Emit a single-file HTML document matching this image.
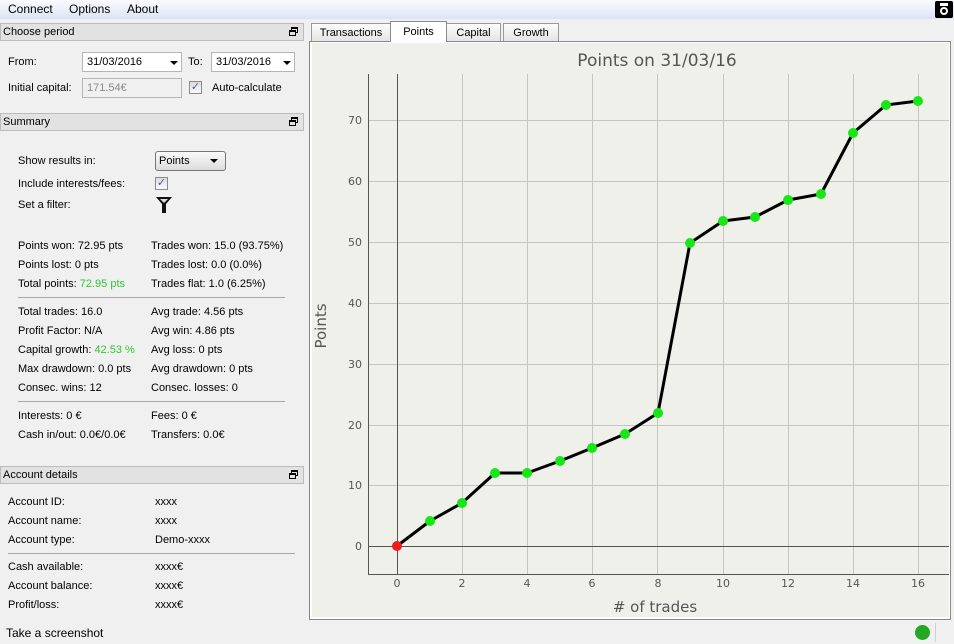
<!DOCTYPE html>
<html><head><meta charset="utf-8"><style>
*{box-sizing:border-box}
body{margin:0;width:954px;height:644px;background:#f0f0f0;font-family:"Liberation Sans",sans-serif;font-size:11px;color:#000;position:relative;overflow:hidden}
.a{position:absolute;white-space:nowrap}
.menu{left:0;top:0;width:954px;height:19px;background:linear-gradient(#fafbfe,#dde3f3);font-size:12px}
.hdr{position:absolute;left:0;width:304px;height:18px;background:#e2e2e2;border:1px solid #bcbcbc;padding:2px 0 0 2px;font-size:11px}
.hdr .ic{position:absolute;right:5px;top:3px;width:9px;height:9px}
.inp{position:absolute;background:#fff;border:1px solid #b5b5b5;height:20px;padding:3px 4px;font-size:11px}
.arr{position:absolute;width:0;height:0;border-left:4px solid transparent;border-right:4px solid transparent;border-top:4px solid #000}
.cb{position:absolute;width:13px;height:13px;border:1px solid #8a8a8a;background:linear-gradient(#dcdcdc,#fafafa)}
.g{color:#2ec82e}
.hr{position:absolute;height:1px;background:#a8a8a8}
.tab{position:absolute;top:23px;height:18px;border:1px solid #9a9a9a;border-bottom:none;background:linear-gradient(#fdfdfd,#e4e4e4);padding:3px 0 0;text-align:center}
</style></head><body>
<div class="a menu"><span class="a" style="left:8px;top:2px">Connect</span><span class="a" style="left:69px;top:2px">Options</span><span class="a" style="left:127px;top:2px">About</span>
<div class="a" style="left:935px;top:1px;width:18px;height:17px;background:#000;border-radius:2px"><div class="a" style="left:5px;top:6px;width:8px;height:8px;border:2px solid #fff;border-radius:50%"></div><div class="a" style="left:5px;top:2px;width:8px;height:3px;background:#fff"></div></div></div>

<div class="hdr" style="top:23px">Choose period<svg class="ic" viewBox="0 0 9 9"><rect x="2.5" y=".5" width="6" height="5" fill="none" stroke="#000"/><rect x="2" y="0" width="7" height="2"/><rect x=".5" y="3.5" width="6" height="5" fill="#e2e2e2" stroke="#000"/><rect x="0" y="3" width="7" height="2"/></svg></div>
<span class="a" style="left:8px;top:56px">From:</span>
<div class="inp" style="left:82px;top:52px;width:100px">31/03/2016</div><div class="arr" style="left:170px;top:61px"></div>
<span class="a" style="left:188px;top:56px">To:</span>
<div class="inp" style="left:211px;top:52px;width:84px">31/03/2016</div><div class="arr" style="left:283px;top:61px"></div>
<span class="a" style="left:8px;top:82px">Initial capital:</span>
<div class="inp" style="left:82px;top:78px;width:100px;background:#f0f0f0;color:#888">171.54€</div>
<div class="cb" style="left:189px;top:81px;color:#3a5fb0;font-size:11px;line-height:11px;text-align:center">✓</div>
<span class="a" style="left:212px;top:82px">Auto-calculate</span>

<div class="hdr" style="top:113px">Summary<svg class="ic" viewBox="0 0 9 9"><rect x="2.5" y=".5" width="6" height="5" fill="none" stroke="#000"/><rect x="2" y="0" width="7" height="2"/><rect x=".5" y="3.5" width="6" height="5" fill="#e2e2e2" stroke="#000"/><rect x="0" y="3" width="7" height="2"/></svg></div>
<span class="a" style="left:18px;top:155px">Show results in:</span>
<div class="a" style="left:155px;top:151px;width:71px;height:20px;border:1px solid #777;border-radius:3px;background:linear-gradient(#fafafa,#dcdcdc);padding:3px 3px">Points</div><div class="arr" style="left:210px;top:159px"></div>
<span class="a" style="left:18px;top:178px">Include interests/fees:</span>
<div class="cb" style="left:155px;top:177px;color:#3a5fb0;font-size:11px;line-height:11px;text-align:center">✓</div>
<span class="a" style="left:18px;top:199px">Set a filter:</span>
<svg class="a" style="left:156px;top:197px" width="16" height="16" viewBox="0 0 16 16"><path d="M0 0H16L10 7V16H6V7Z" fill="#111"/><path d="M4 2H12L8 6Z" fill="#ddd"/></svg>
<span class="a" style="left:18px;top:240px">Points won: 72.95 pts</span><span class="a" style="left:151px;top:240px">Trades won: 15.0 (93.75%)</span>
<span class="a" style="left:18px;top:259px">Points lost: 0 pts</span><span class="a" style="left:151px;top:259px">Trades lost: 0.0 (0.0%)</span>
<span class="a" style="left:18px;top:278px">Total points: <span class="g">72.95 pts</span></span><span class="a" style="left:151px;top:278px">Trades flat: 1.0 (6.25%)</span>
<div class="hr" style="left:18px;top:297px;width:267px"></div>
<span class="a" style="left:18px;top:306px">Total trades: 16.0</span><span class="a" style="left:151px;top:306px">Avg trade: 4.56 pts</span>
<span class="a" style="left:18px;top:325px">Profit Factor: N/A</span><span class="a" style="left:151px;top:325px">Avg win: 4.86 pts</span>
<span class="a" style="left:18px;top:344px">Capital growth: <span class="g">42.53 %</span></span><span class="a" style="left:151px;top:344px">Avg loss: 0 pts</span>
<span class="a" style="left:18px;top:363px">Max drawdown: 0.0 pts</span><span class="a" style="left:151px;top:363px">Avg drawdown: 0 pts</span>
<span class="a" style="left:18px;top:382px">Consec. wins: 12</span><span class="a" style="left:151px;top:382px">Consec. losses: 0</span>
<div class="hr" style="left:18px;top:401px;width:267px"></div>
<span class="a" style="left:18px;top:410px">Interests: 0 €</span><span class="a" style="left:151px;top:410px">Fees: 0 €</span>
<span class="a" style="left:18px;top:429px">Cash in/out: 0.0€/0.0€</span><span class="a" style="left:151px;top:429px">Transfers: 0.0€</span>

<div class="hdr" style="top:466px">Account details<svg class="ic" viewBox="0 0 9 9"><rect x="2.5" y=".5" width="6" height="5" fill="none" stroke="#000"/><rect x="2" y="0" width="7" height="2"/><rect x=".5" y="3.5" width="6" height="5" fill="#e2e2e2" stroke="#000"/><rect x="0" y="3" width="7" height="2"/></svg></div>
<span class="a" style="left:8px;top:496px">Account ID:</span><span class="a" style="left:155px;top:496px">xxxx</span>
<span class="a" style="left:8px;top:515px">Account name:</span><span class="a" style="left:155px;top:515px">xxxx</span>
<span class="a" style="left:8px;top:534px">Account type:</span><span class="a" style="left:155px;top:534px">Demo-xxxx</span>
<div class="hr" style="left:8px;top:553px;width:287px"></div>
<span class="a" style="left:8px;top:561px">Cash available:</span><span class="a" style="left:155px;top:561px">xxxx€</span>
<span class="a" style="left:8px;top:580px">Account balance:</span><span class="a" style="left:155px;top:580px">xxxx€</span>
<span class="a" style="left:8px;top:599px">Profit/loss:</span><span class="a" style="left:155px;top:599px">xxxx€</span>
<span class="a" style="left:6px;top:626px;font-size:12px">Take a screenshot</span>

<div class="tab" style="left:311px;width:80px">Transactions</div>
<div class="tab" style="left:446px;width:55px">Capital</div>
<div class="tab" style="left:503px;width:56px">Growth</div>
<div class="a" style="left:309px;top:41px;width:642px;height:579px;border:1px solid #8a8a8a;background:#fff"></div>
<div class="tab" style="left:390px;top:21px;width:57px;height:21px;background:#fff;border-color:#8a8a8a;padding-top:4px">Points</div>
<svg class="a" style="left:312px;top:43px" width="637" height="574" viewBox="312 43 637 574">
<rect x="312" y="43" width="637" height="574" fill="#f0f0ea"/>
<g stroke="#c4c4c0" stroke-width="1">
<line x1="368" x2="949" y1="485.5" y2="485.5"/><line x1="368" x2="949" y1="425.5" y2="425.5"/><line x1="368" x2="949" y1="364.5" y2="364.5"/><line x1="368" x2="949" y1="303.5" y2="303.5"/><line x1="368" x2="949" y1="242.5" y2="242.5"/><line x1="368" x2="949" y1="181.5" y2="181.5"/><line x1="368" x2="949" y1="120.5" y2="120.5"/>
<line y1="74" y2="574" x1="462.5" x2="462.5"/><line y1="74" y2="574" x1="527.5" x2="527.5"/><line y1="74" y2="574" x1="592.5" x2="592.5"/><line y1="74" y2="574" x1="657.5" x2="657.5"/><line y1="74" y2="574" x1="723.5" x2="723.5"/><line y1="74" y2="574" x1="788.5" x2="788.5"/><line y1="74" y2="574" x1="853.5" x2="853.5"/><line y1="74" y2="574" x1="918.5" x2="918.5"/>
</g>
<g stroke="#555" stroke-width="1"><line x1="368.5" x2="368.5" y1="74" y2="574"/><line x1="397.5" x2="397.5" y1="74" y2="574"/><line x1="368" x2="949" y1="546.5" y2="546.5"/><line x1="368" x2="949" y1="574.5" y2="574.5"/></g>
<g fill="#555" font-family="DejaVu Sans,sans-serif" font-size="11" text-anchor="end"><text x="362" y="550">0</text><text x="362" y="489">10</text><text x="362" y="429">20</text><text x="362" y="368">30</text><text x="362" y="307">40</text><text x="362" y="246">50</text><text x="362" y="185">60</text><text x="362" y="124">70</text></g>
<g fill="#555" font-family="DejaVu Sans,sans-serif" font-size="11" text-anchor="middle"><text x="397" y="587">0</text><text x="462" y="587">2</text><text x="527" y="587">4</text><text x="592" y="587">6</text><text x="658" y="587">8</text><text x="723" y="587">10</text><text x="788" y="587">12</text><text x="853" y="587">14</text><text x="918" y="587">16</text></g>
<text x="657" y="66" text-anchor="middle" font-family="DejaVu Sans,sans-serif" font-size="17" fill="#555">Points on 31/03/16</text>
<text x="655" y="612" text-anchor="middle" font-family="DejaVu Sans,sans-serif" font-size="15" fill="#555"># of trades</text>
<text transform="translate(326,326) rotate(-90)" text-anchor="middle" font-family="DejaVu Sans,sans-serif" font-size="15" fill="#555">Points</text>
<polyline fill="none" stroke="#000" stroke-width="3" stroke-linejoin="round" points="397,546 430,521 462,503 495,473 527,473 560,461 592,448 625,434 658,413 690,243 723,221 755,217 788,200 821,194 853,133 886,105 918,101"/>
<g fill="#17e617"><circle cx="430" cy="521" r="5"/><circle cx="462" cy="503" r="5"/><circle cx="495" cy="473" r="5"/><circle cx="527" cy="473" r="5"/><circle cx="560" cy="461" r="5"/><circle cx="592" cy="448" r="5"/><circle cx="625" cy="434" r="5"/><circle cx="658" cy="413" r="5"/><circle cx="690" cy="243" r="5"/><circle cx="723" cy="221" r="5"/><circle cx="755" cy="217" r="5"/><circle cx="788" cy="200" r="5"/><circle cx="821" cy="194" r="5"/><circle cx="853" cy="133" r="5"/><circle cx="886" cy="105" r="5"/><circle cx="918" cy="101" r="5"/></g>
<circle cx="397" cy="546" r="5" fill="#f01a1a"/>
</svg>
<div class="a" style="left:915px;top:625px;width:15px;height:15px;border-radius:50%;background:#22a822"></div>
<div class="a" style="left:935px;top:623px;width:1px;height:19px;background:#d0d0d0"></div>
</body></html>
